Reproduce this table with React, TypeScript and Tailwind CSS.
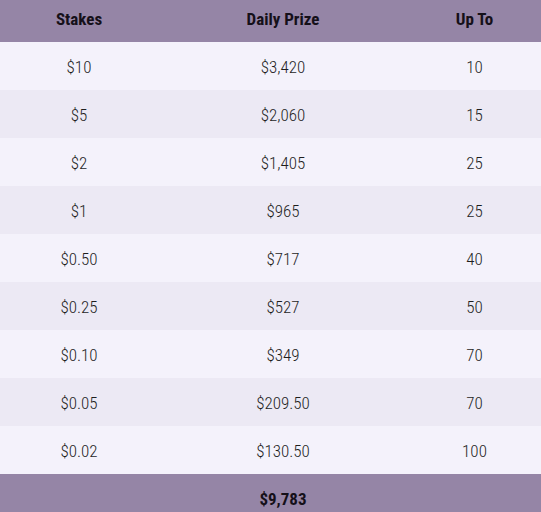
const rows = [
  ["$10", "$3,420", "10"],
  ["$5", "$2,060", "15"],
  ["$2", "$1,405", "25"],
  ["$1", "$965", "25"],
  ["$0.50", "$717", "40"],
  ["$0.25", "$527", "50"],
  ["$0.10", "$349", "70"],
  ["$0.05", "$209.50", "70"],
  ["$0.02", "$130.50", "100"],
];

export default function App() {
  return (
    <div className="h-[512px] w-[541px] overflow-hidden bg-white font-['Roboto_Condensed','DejaVu_Sans_Condensed',Roboto,sans-serif] [font-stretch:condensed]">
      <div className="grid h-[42px] grid-cols-[158px_250px_133px] items-start bg-[#9585a6] pt-[7px] text-center text-[17px] font-bold text-[#151019]">
        <div>Stakes</div>
        <div>Daily Prize</div>
        <div>Up To</div>
      </div>
      {rows.map((r, i) => (
        <div
          key={i}
          className={
            "grid h-12 grid-cols-[158px_250px_133px] items-center pt-[3px] text-center text-[17px] font-light text-[#1e1e1e] " +
            (i % 2 === 0 ? "bg-[#f4f2fb]" : "bg-[#ece9f4]")
          }
        >
          <div>{r[0]}</div>
          <div>{r[1]}</div>
          <div>{r[2]}</div>
        </div>
      ))}
      <div className="grid h-12 grid-cols-[158px_250px_133px] items-center pt-[3px] bg-[#9585a6] text-center text-[17px] font-bold text-[#151019]">
        <div></div>
        <div>$9,783</div>
        <div></div>
      </div>
    </div>
  );
}
